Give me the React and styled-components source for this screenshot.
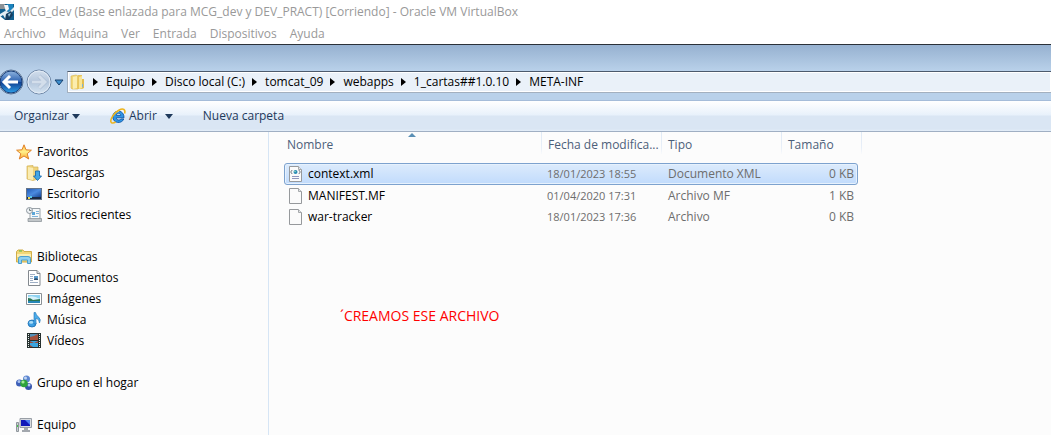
import React from "react";
import styled, { createGlobalStyle } from "styled-components";

const GlobalStyle = createGlobalStyle`
  * { box-sizing: border-box; }
  body {
    margin: 0;
    background: #fcfcfc;
    font-family: "Open Sans", "Noto Sans", sans-serif;
    font-size: 12px;
    line-height: 16px;
    color: #000;
  }
  button { font: inherit; color: inherit; background: none; border: 0; padding: 0; margin: 0; }
  svg { display: block; flex: none; }
`;

const Window = styled.div`
  display: flex;
  flex-direction: column;
  min-height: 100vh;
  min-width: 880px;
`;

const TitleBar = styled.header`
  display: flex;
  align-items: center;
  gap: 4px;
  height: 24px;
  background: #fff;
  color: #999;
`;

const MenuBar = styled.nav`
  display: flex;
  gap: 13px;
  height: 20px;
  padding-left: 4px;
  align-items: center;
  background: #fff;
  color: #999;
`;

const Glass = styled.div`
  height: 27px;
  border-top: 1px solid #2b3138;
  background: linear-gradient(#96b1d0, #b9d1ea);
`;

const AddressRow = styled.div`
  display: flex;
  align-items: flex-start;
  height: 30px;
  border-bottom: 1px solid #a5bcd9;
  background: #b9d1ea;
`;

const Travel = styled.div`
  display: flex;
  align-items: center;
  width: 67px;
  height: 22px;
`;

const TravelButton = styled.button`
  width: ${(p) => p.$width};
`;

const Address = styled.nav`
  display: flex;
  align-items: center;
  flex: 1;
  height: 22px;
  padding-left: 2px;
  border: 1px solid #a3b0bf;
  border-top-color: #4c5a6d;
  border-right: 0;
  background: #eaf1f9;
  box-shadow: inset 0 0 0 1px #fff;
`;

const Crumb = styled.button`
  display: flex;
  align-items: center;
  gap: 8px;
  margin-left: 7px;
  white-space: nowrap;
`;

const Toolbar = styled.div`
  display: flex;
  align-items: center;
  height: 31px;
  padding-left: 14px;
  border-bottom: 1px solid #a0afc3;
  background: linear-gradient(#fff, #e8f1fb 14px, #dae6f4 15px, #dae6f4 28px, #e4eef9);
  color: #1e395b;
`;

const ToolButton = styled.button`
  display: flex;
  align-items: center;
  gap: 3px;
  margin-right: 30px;
`;

const SplitLabel = styled.span`
  padding-right: 5px;
`;

const Body = styled.div`
  display: flex;
  flex: 1;
`;

const Sidebar = styled.nav`
  width: 269px;
  flex: none;
  padding: 9px 0 0 16px;
  border-right: 1px solid #d6e5f5;
`;

const Group = styled.section`
  &:not(:last-child) { margin-bottom: 21px; }
`;

const SideLink = styled.a`
  display: flex;
  align-items: center;
  gap: 5px;
  height: 21px;
  padding-left: ${(p) => (p.$child ? "10px" : "0")};
  color: #000;
  text-decoration: none;
`;

const Main = styled.main`
  flex: 1;
  padding-left: 15px;
`;

const Files = styled.table`
  display: block;
  border-spacing: 0;
`;

const HeadRow = styled.tr`
  display: grid;
  grid-template-columns: 258px 120px 120px 80px;
  margin-bottom: 9px;
`;

const HeadCell = styled.th`
  position: relative;
  height: 22px;
  padding: 5px 0 0 ${(p) => (p.$first ? "3px" : "6px")};
  border-right: 1px solid;
  border-image: linear-gradient(#dfe9f5, #e8eff8 70%, #fcfcfc) 1;
  color: #4c607a;
  font-weight: 400;
  text-align: left;
  white-space: nowrap;
`;

const SortMark = styled.svg`
  position: absolute;
  top: 1px;
  left: 50%;
  margin-left: -5px;
`;

const FileRow = styled.tr`
  display: grid;
  grid-template-columns: 257px 120px 120px 1fr;
  align-items: center;
  width: 574px;
  height: 21px;
  border: 1px solid ${(p) => (p.$selected ? "#7da2ce" : "transparent")};
  border-radius: 3px;
  ${(p) => p.$selected && "height: 22px; background: linear-gradient(#dcebfc, #c1dbfc); box-shadow: inset 0 0 0 1px #e6f1fd;"}
`;

const Cell = styled.td`
  display: flex;
  align-items: center;
  gap: 4px;
  padding: 0 3px 0 ${(p) => p.$pad || "3px"};
  justify-content: ${(p) => (p.$end ? "flex-end" : "flex-start")};
  font-size: ${(p) => (p.$date ? "11px" : "12px")};
  color: ${(p) => (p.$name ? "#000" : "#6d6d6d")};
  white-space: nowrap;
`;

const Note = styled.p`
  margin: 80px 0 0 56px;
  font-size: 14px;
  line-height: 18px;
  color: #f00;
`;

const Svg = ({ w = 16, h = 16, children, ...rest }) => (
  <svg width={w} height={h} viewBox={`0 0 ${w} ${h}`} aria-hidden="true" {...rest}>{children}</svg>
);

const VmIcon = () => (
  <Svg w={15} h={20}>
    <path d="M0 2h14v16H5L0 14z" fill="#12608f" />
    <path d="M0 2h5v5H0z" fill="#8b9297" />
    <path d="M7 2h6v6L8 10z" fill="#1c83bd" />
    <path d="M0 12l5-3 4 1 5-5v3l-6 6-2 4-3-5-3 2z" fill="#e4eef4" />
    <path d="M4 3h4l1 4-3 3z" fill="#f5f8fa" />
    <path d="M6 12l5-3 2 4-4 5H5z" fill="#173e60" />
    <path d="M8 12l3-1-2 4z" fill="#9cc6dc" />
  </Svg>
);

const BackIcon = () => (
  <Svg w={25} h={28}>
    <defs>
      <linearGradient id="bk" x1="0" y1="0" x2="0" y2="1">
        <stop offset="0" stopColor="#8fb4df" /><stop offset=".48" stopColor="#2e63b1" />
        <stop offset=".5" stopColor="#0f3d8f" /><stop offset="1" stopColor="#2fa0e8" />
      </linearGradient>
    </defs>
    <circle cx="11" cy="14" r="12" fill="#f0f6fc" stroke="#5a7597" />
    <circle cx="11" cy="14" r="11" fill="url(#bk)" stroke="#163c77" />
    <path d="M10 8l-6 6 6 6M5 14h13" fill="none" stroke="#fff" strokeWidth="3" />
  </Svg>
);

const ForwardIcon = () => (
  <Svg w={28} h={28}>
    <defs>
      <linearGradient id="fw" x1="0" y1="0" x2="0" y2="1">
        <stop offset="0" stopColor="#d3dfed" /><stop offset=".5" stopColor="#b4c6dc" /><stop offset="1" stopColor="#d5e4f2" />
      </linearGradient>
    </defs>
    <circle cx="14" cy="14" r="12" fill="url(#fw)" stroke="#7189a8" />
    <circle cx="14" cy="14" r="11" fill="none" stroke="#e3ecf6" />
    <path d="M14 8l6 6-6 6M20 14H7" fill="none" stroke="#a6b9d0" strokeWidth="4" />
    <path d="M14 8l6 6-6 6M20 14H7" fill="none" stroke="#d3deeb" strokeWidth="3" />
  </Svg>
);

const DropIcon = () => (
  <Svg w={10} h={7}><path d="M1 1h8L5 6z" fill="#3c8fd0" stroke="#173f6b" /></Svg>
);

const Arrow = () => (
  <Svg w={5} h={8}><path d="M0 0l5 4-5 4z" fill="#000" /></Svg>
);

const Caret = () => (
  <Svg w={8} h={5}><path d="M0 0h8L4 5z" fill="#1e395b" /></Svg>
);

const FolderIcon = () => (
  <Svg>
    <path d="M1 2l5-1 2 1v13H2l-1-1z" fill="#f2d878" stroke="#d7b653" strokeWidth=".6" />
    <path d="M3 3l4-1v12l-4 1z" fill="#fbedae" />
    <path d="M8 1h4v14H7z" fill="#e8c55c" />
    <path d="M9 3l3-1v12l-3 1z" fill="#f8e596" />
    <path d="M12 5h2v9l-2 1z" fill="#e3bd50" />
    <path d="M12 10h1v3h-1z" fill="#7fb3d5" />
  </Svg>
);

const IeIcon = () => (
  <Svg>
    <path d="M14 9.800H6.300c.3 2.600 3.600 2.900 4.500 1.200h3c-2 5.200-11 4.600-11-2.200C2.800 1.400 14.400.8 14 9.800zM6.300 7.300h4.500c-.3-2.600-4.200-2.600-4.500 0z" fill="#2f95e6" stroke="#0d56a6" strokeWidth=".9" />
    <path d="M4.500 5.500Q6 3.300 9 3.500" fill="none" stroke="#a7dcfa" />
    <path d="M14.600 5.500c1.200-4-1.400-5.600-5.400-3.500C4.500 4.500-.2 11.200 1 14c.6 1.500 2.600 1.200 4.600 0" fill="none" stroke="#eeb41c" strokeWidth="1.600" />
  </Svg>
);

const StarIcon = () => (
  <Svg>
    <defs><linearGradient id="st" x1="0" y1="0" x2="0" y2="1"><stop offset="0" stopColor="#ffc04a" /><stop offset=".5" stopColor="#fff08a" /><stop offset="1" stopColor="#fba62c" /></linearGradient></defs>
    <path d="M8 .8l2 5 5.400.4-4.200 3.500 1.500 5.300L8 12l-4.700 3 1.500-5.300L.6 6.200 6 5.800z" fill="url(#st)" stroke="#e0812a" strokeLinejoin="round" />
  </Svg>
);

const DownloadsIcon = () => (
  <Svg>
    <path d="M1 1l6-.5V2h5v12l-5 1.500L1 14z" fill="#efd37c" stroke="#d3b256" strokeWidth=".7" />
    <path d="M2 2l5 1v12l-5-1z" fill="#faecb2" />
    <path d="M9.500 6h4v5h2l-4 4.500L7.500 11h2z" fill="#43a6e4" stroke="#1b6bae" strokeWidth=".9" />
  </Svg>
);

const DesktopIcon = () => (
  <Svg>
    <defs><linearGradient id="dk" x1="0" y1="0" x2="1" y2="1"><stop offset="0" stopColor="#245bb5" /><stop offset=".5" stopColor="#4b8be0" /><stop offset="1" stopColor="#174594" /></linearGradient></defs>
    <path d="M0 2h16v12H0z" fill="#64748a" />
    <path d="M1 3h14v8H1z" fill="url(#dk)" />
    <path d="M1 11h14v2H1z" fill="#1c2b43" />
    <path d="M2 11h2v2H2z" fill="#f0d94c" /><path d="M4 10h2v2H4z" fill="#59c8ec" />
  </Svg>
);

const RecentIcon = () => (
  <Svg>
    <path d="M5 1.500h9v11H4v-6z" fill="#f5f8fa" stroke="#9aa2a8" />
    <path d="M6 5h3v3H6z" fill="#5ba6d8" /><path d="M10 4.500h3M10 6.500h3M6 9.500h6" stroke="#7fb4da" />
    <path d="M2 11.500h13.500v3H2z" fill="#c2c7ca" stroke="#858d92" strokeWidth=".7" />
    <circle cx="3.500" cy="3.500" r="3" fill="#eef2f5" stroke="#8e979e" /><path d="M3.500 1.500v2h2" fill="none" stroke="#566" strokeWidth=".8" />
  </Svg>
);

const LibraryIcon = () => (
  <Svg>
    <path d="M.5 2.500L2 1h5l1 1.500h7.500V13H.5z" fill="#f1d877" stroke="#d1ad4a" />
    <path d="M1 5h14v3H1z" fill="#fbedb0" />
    <path d="M3 2h3" stroke="#54b948" />
    <path d="M2.500 14.500v-5Q2.500 7.500 5 7.500h7q2.500 0 2.500 2v5h-3v-3.500H5.500v3.500z" fill="#8fd0f0" stroke="#4a9fce" />
  </Svg>
);

const DocumentIcon = () => (
  <Svg>
    <path d="M2.500.5H11l3 3v12H2.500z" fill="#fff" stroke="#83898f" />
    <path d="M11 .5v3h3" fill="#dde3e8" stroke="#83898f" />
    <path d="M4 4.500h5M4 6.500h3M4 8.500h3M4 10.500h3M4 12.500h8" stroke="#9fb0c6" />
    <path d="M8 6h4v4H8z" fill="#5a9acb" /><path d="M8 9l2-1 2 1v1H8z" fill="#33506e" />
  </Svg>
);

const PictureIcon = () => (
  <Svg>
    <path d="M.5 2.500h15v11H.5z" fill="#fff" stroke="#8a9095" />
    <path d="M2 4h12v8H2z" fill="#8ed2f1" />
    <path d="M2 6q5-2 12 2v2H2z" fill="#d7f1fa" />
    <path d="M2 7q3 0 5 2l7-1v2H2z" fill="#2b7653" /><path d="M2 10h12v2H2z" fill="#2887b8" />
  </Svg>
);

const MusicIcon = () => (
  <Svg>
    <ellipse cx="6" cy="11.500" rx="4" ry="3.500" fill="#3d9fe2" stroke="#1668ad" strokeWidth=".8" />
    <path d="M8 12V.5h1.500q.5 2.500 3 4.500 3 2.500 1 6 0-3.500-3.500-5V12z" fill="#4cace9" stroke="#1a70b5" strokeWidth=".6" />
    <ellipse cx="5.200" cy="10.400" rx="2" ry="1.300" fill="#a8dcf8" />
  </Svg>
);

const VideoIcon = () => (
  <Svg>
    <path d="M1 0h14v15H1z" fill="#26302f" />
    <path d="M4 1h8v6H4z" fill="#5590b8" /><path d="M4 4l4-1 4-2v6H4z" fill="#a4513c" />
    <path d="M4 8h8v6H4z" fill="#3ba5e0" /><path d="M4 8l4 2 4-2v2H4zM4 12l3 2H4z" fill="#9c4a38" />
    <path d="M2.500 1v13M13.500 1v13" stroke="#e9f2ee" strokeDasharray="1 1" />
  </Svg>
);

const HomegroupIcon = () => (
  <Svg>
    <circle cx="10.500" cy="4" r="3.500" fill="#5d86d0" /><circle cx="9.500" cy="3" r="1.500" fill="#c1d5f4" />
    <circle cx="3.500" cy="8" r="3.500" fill="#3d5fb8" /><circle cx="3" cy="6.500" r="1.500" fill="#a9c1ee" />
    <circle cx="12.500" cy="11.500" r="3.500" fill="#3655ab" /><circle cx="13" cy="10" r="1.500" fill="#b2c8f2" />
    <circle cx="8" cy="8.500" r="3.800" fill="#2ea33b" /><circle cx="7" cy="7" r="1.600" fill="#a5e89a" />
  </Svg>
);

const ComputerIcon = () => (
  <Svg>
    <path d="M4 1.500h11.500v9H4z" fill="#d8dbdf" stroke="#999fa6" />
    <path d="M5 3h9v6H5z" fill="#1018b8" /><path d="M9 3h5v5z" fill="#4d7df0" />
    <path d="M8 11h4v2h2v2H6v-2h2z" fill="#a3a8ae" />
    <path d="M.5 5.500h2v9h-2z" fill="#c9ced2" stroke="#8f969c" /><path d="M1 8h1v2H1z" fill="#42c644" />
  </Svg>
);

const FileIcon = ({ xml }) => (
  <Svg>
    <path d="M1.500.5h9l3 3v12h-12z" fill="#fbfbfb" stroke="#96999c" />
    <path d="M10.500.5v3h3" fill="#e4e6e8" stroke="#a5a8ab" />
    {xml && (
      <>
        <path d="M4.200 4L2.700 6l1.500 2M10.800 4l1.500 2-1.500 2" fill="none" stroke="#4c5560" strokeWidth=".8" />
        <circle cx="7.500" cy="6" r="2" fill="#2a8bb5" /><circle cx="7" cy="5.500" r=".8" fill="#8fdac0" />
        <path d="M4 10.500h7M4 12.500h7" stroke="#9297bd" />
      </>
    )}
  </Svg>
);

const menus = ["Archivo", "Máquina", "Ver", "Entrada", "Dispositivos", "Ayuda"];
const crumbs = ["Equipo", "Disco local (C:)", "tomcat_09", "webapps", "1_cartas##1.0.10", "META-INF"];
const groups = [
  [["Favoritos", StarIcon], ["Descargas", DownloadsIcon], ["Escritorio", DesktopIcon], ["Sitios recientes", RecentIcon]],
  [["Bibliotecas", LibraryIcon], ["Documentos", DocumentIcon], ["Imágenes", PictureIcon], ["Música", MusicIcon], ["Vídeos", VideoIcon]],
  [["Grupo en el hogar", HomegroupIcon]],
  [["Equipo", ComputerIcon]],
];
const files = [
  ["context.xml", "18/01/2023 18:55", "Documento XML", "0 KB"],
  ["MANIFEST.MF", "01/04/2020 17:31", "Archivo MF", "1 KB"],
  ["war-tracker", "18/01/2023 17:36", "Archivo", "0 KB"],
];

export default function App() {
  return (
    <Window>
      <GlobalStyle />
      <TitleBar>
        <VmIcon />
        <span>MCG_dev (Base enlazada para MCG_dev y DEV_PRACT) [Corriendo] - Oracle VM VirtualBox</span>
      </TitleBar>
      <MenuBar>{menus.map((m) => <button key={m}>{m}</button>)}</MenuBar>
      <Glass />
      <AddressRow>
        <Travel>
          <TravelButton $width="25px" aria-label="Atrás"><BackIcon /></TravelButton>
          <TravelButton $width="29px" aria-label="Adelante"><ForwardIcon /></TravelButton>
          <button aria-label="Páginas recientes"><DropIcon /></button>
        </Travel>
        <Address>
          <FolderIcon />
          {crumbs.map((c) => <Crumb key={c}><Arrow />{c}</Crumb>)}
        </Address>
      </AddressRow>
      <Toolbar>
        <ToolButton>Organizar <Caret /></ToolButton>
        <ToolButton><IeIcon /><SplitLabel>Abrir</SplitLabel><Caret /></ToolButton>
        <ToolButton>Nueva carpeta</ToolButton>
      </Toolbar>
      <Body>
        <Sidebar>
          {groups.map((items) => (
            <Group key={items[0][0]}>
              {items.map(([label, Icon], i) => (
                <SideLink key={label} href="#" $child={i > 0}><Icon />{label}</SideLink>
              ))}
            </Group>
          ))}
        </Sidebar>
        <Main>
          <Files>
            <thead>
              <HeadRow>
                <HeadCell $first>Nombre<SortMark width="8" height="5" viewBox="0 0 8 5"><path d="M4 0l4 4H0z" fill="#5a8fb5" /></SortMark></HeadCell>
                <HeadCell>Fecha de modifica...</HeadCell>
                <HeadCell>Tipo</HeadCell>
                <HeadCell>Tamaño</HeadCell>
              </HeadRow>
            </thead>
            <tbody>
              {files.map(([name, date, type, size], i) => (
                <FileRow key={name} $selected={i === 0}>
                  <Cell $name><FileIcon xml={i === 0} />{name}</Cell>
                  <Cell $date $pad="5px">{date}</Cell>
                  <Cell $pad="6px">{type}</Cell>
                  <Cell $end>{size}</Cell>
                </FileRow>
              ))}
            </tbody>
          </Files>
          <Note>´CREAMOS ESE ARCHIVO</Note>
        </Main>
      </Body>
    </Window>
  );
}
